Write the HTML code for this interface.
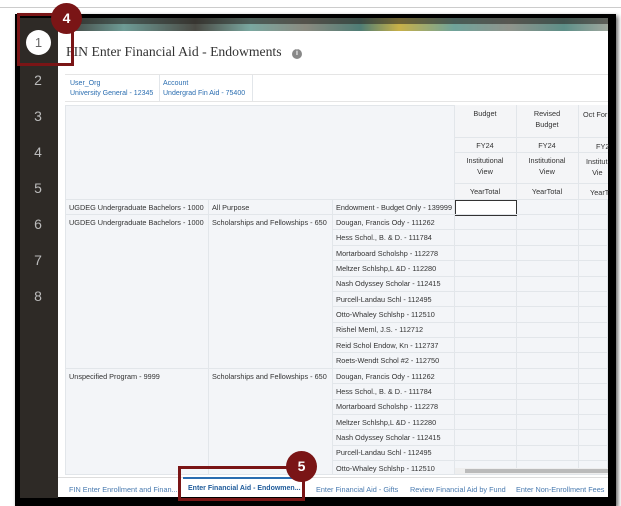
<!DOCTYPE html>
<html><head><style>
*{margin:0;padding:0;box-sizing:border-box}
body{width:621px;height:506px;background:#fff;position:relative;overflow:hidden;font-family:"Liberation Sans",sans-serif}
.a{position:absolute}
.t{position:absolute;font-size:7.3px;color:#333;white-space:nowrap}
.n{position:absolute;color:#bbb;font-size:14px;width:36px;text-align:center;left:20px}
.hl{position:absolute;height:1px;background:#e2e6ea}
.vl{position:absolute;width:1px;background:#e2e6ea}
.c{position:absolute;font-size:7.3px;color:#333;text-align:center;line-height:11px}
.tb{position:absolute;top:485px;color:#4a7bb0;font-size:7.3px;white-space:nowrap}
</style></head><body>
<div class="a" style="left:0;top:7px;width:621px;height:1px;background:#ccc"></div>
<div class="a" style="left:15px;top:14px;width:601px;height:492px;background:#000;box-shadow:2px 2px 4px #666"></div>
<div class="a" style="left:20px;top:18px;width:38px;height:480px;background:#2e2a26"></div>
<div class="a" style="left:58px;top:18px;width:550px;height:13px;background:linear-gradient(90deg,#3a3632,#6e9c96 12%,#4a4a44 25%,#7aa8a0 35%,#8a8a80 45%,#4f7d75 55%,#c8b048 62%,#6fa39b 72%,#90948c 82%,#5d8f88 92%,#a0a89e)"></div>
<div class="a" style="left:58px;top:18px;width:550px;height:6px;background:rgba(40,36,32,.55)"></div>
<div class="a" style="left:58px;top:31px;width:550px;height:466px;background:#fff"></div>
<div class="a" style="left:66px;top:44px;font-family:'Liberation Serif',serif;font-size:13.7px;color:#333">FIN Enter Financial Aid - Endowments</div>
<div class="a" style="left:292px;top:49px;width:10px;height:10px;border-radius:50%;background:#888;color:#fff;font-size:7px;text-align:center;line-height:10px;font-weight:bold">i</div>
<div class="a" style="left:65px;top:74px;width:543px;height:28px;border-top:1px solid #e5e5e5;border-bottom:1px solid #e5e5e5"></div>
<div class="vl" style="left:159px;top:75px;height:26px"></div><div class="vl" style="left:252px;top:75px;height:26px"></div>
<div class="t" style="left:70px;top:80px;color:#2a6db0;font-size:7px">User_Org</div>
<div class="t" style="left:70px;top:90px;color:#2a6db0;font-size:7px">University General - 12345</div>
<div class="t" style="left:163px;top:80px;color:#2a6db0;font-size:7px">Account</div>
<div class="t" style="left:163px;top:90px;color:#2a6db0;font-size:7px">Undergrad Fin Aid - 75400</div>
<div class="a" style="left:65px;top:105px;width:543px;height:370px;background:#f3f5f8;border:1px solid #e2e6ea"></div>
<div class="a" style="left:454px;top:105px;width:154px;height:94px;background:#f4f5f7"></div>
<div class="vl" style="left:454px;top:105px;height:370px"></div><div class="vl" style="left:516px;top:105px;height:370px"></div><div class="vl" style="left:578px;top:105px;height:370px"></div>
<div class="vl" style="left:208px;top:199px;height:276px"></div><div class="vl" style="left:332px;top:199px;height:276px"></div>
<div class="hl" style="left:454px;top:137px;width:154px"></div><div class="hl" style="left:454px;top:152px;width:154px"></div><div class="hl" style="left:454px;top:183px;width:154px"></div>
<div class="hl" style="left:65px;top:199px;width:543px"></div>
<div class="c" style="left:454px;top:108px;width:62px">Budget</div>
<div class="c" style="left:516px;top:108px;width:62px">Revised<br>Budget</div>
<div class="t" style="left:583px;top:110px">Oct For</div>
<div class="c" style="left:454px;top:140px;width:62px">FY24</div><div class="c" style="left:516px;top:140px;width:62px">FY24</div><div class="t" style="left:596px;top:142px">FY2</div>
<div class="c" style="left:454px;top:155px;width:62px">Institutional<br>View</div><div class="c" style="left:516px;top:155px;width:62px">Institutional<br>View</div><div class="t" style="left:586px;top:156px;line-height:11px">Institut<br>&nbsp;&nbsp;&nbsp;Vie</div>
<div class="c" style="left:454px;top:186px;width:62px">YearTotal</div><div class="c" style="left:516px;top:186px;width:62px">YearTotal</div><div class="t" style="left:590px;top:188px">YearT</div>
<div class="a" style="left:455px;top:200px;width:62px;height:16px;border:1.5px solid #333;background:#fff"></div>
<div class="t" style="left:69px;top:203px">UGDEG Undergraduate Bachelors - 1000</div><div class="t" style="left:212px;top:203px">All Purpose</div>
<div class="hl" style="left:65px;top:214px;width:543px"></div>
<div class="t" style="left:69px;top:218px">UGDEG Undergraduate Bachelors - 1000</div><div class="t" style="left:212px;top:218px">Scholarships and Fellowships - 650</div>
<div class="hl" style="left:65px;top:368px;width:543px"></div>
<div class="t" style="left:69px;top:372px">Unspecified Program - 9999</div><div class="t" style="left:212px;top:372px">Scholarships and Fellowships - 650</div>
<div class="t" style="left:336px;top:203px">Endowment - Budget Only - 139999</div>
<div class="t" style="left:336px;top:218px">Dougan, Francis Ody - 111262</div>
<div class="hl" style="left:332px;top:229px;width:276px"></div><div class="t" style="left:336px;top:233px">Hess Schol., B. &amp; D. - 111784</div>
<div class="hl" style="left:332px;top:245px;width:276px"></div><div class="t" style="left:336px;top:249px">Mortarboard Scholshp - 112278</div>
<div class="hl" style="left:332px;top:260px;width:276px"></div><div class="t" style="left:336px;top:264px">Meltzer Schlshp,L &amp;D - 112280</div>
<div class="hl" style="left:332px;top:276px;width:276px"></div><div class="t" style="left:336px;top:279px">Nash Odyssey Scholar - 112415</div>
<div class="hl" style="left:332px;top:291px;width:276px"></div><div class="t" style="left:336px;top:295px">Purcell-Landau Schl - 112495</div>
<div class="hl" style="left:332px;top:306px;width:276px"></div><div class="t" style="left:336px;top:310px">Otto-Whaley Schlshp - 112510</div>
<div class="hl" style="left:332px;top:322px;width:276px"></div><div class="t" style="left:336px;top:325px">Rishel Meml, J.S. - 112712</div>
<div class="hl" style="left:332px;top:337px;width:276px"></div><div class="t" style="left:336px;top:341px">Reid Schol Endow, Kn - 112737</div>
<div class="hl" style="left:332px;top:352px;width:276px"></div><div class="t" style="left:336px;top:356px">Roets-Wendt Schol #2 - 112750</div>
<div class="t" style="left:336px;top:372px">Dougan, Francis Ody - 111262</div>
<div class="hl" style="left:332px;top:383px;width:276px"></div><div class="t" style="left:336px;top:387px">Hess Schol., B. &amp; D. - 111784</div>
<div class="hl" style="left:332px;top:399px;width:276px"></div><div class="t" style="left:336px;top:402px">Mortarboard Scholshp - 112278</div>
<div class="hl" style="left:332px;top:414px;width:276px"></div><div class="t" style="left:336px;top:418px">Meltzer Schlshp,L &amp;D - 112280</div>
<div class="hl" style="left:332px;top:429px;width:276px"></div><div class="t" style="left:336px;top:433px">Nash Odyssey Scholar - 112415</div>
<div class="hl" style="left:332px;top:445px;width:276px"></div><div class="t" style="left:336px;top:448px">Purcell-Landau Schl - 112495</div>
<div class="hl" style="left:332px;top:460px;width:276px"></div><div class="t" style="left:336px;top:464px">Otto-Whaley Schlshp - 112510</div>
<div class="a" style="left:455px;top:468px;width:153px;height:6px;background:#eee"></div>
<div class="a" style="left:465px;top:469px;width:143px;height:4px;background:#bbb"></div>
<div class="a" style="left:58px;top:477px;width:550px;height:20px;background:#fff;border-top:1px solid #ddd"></div>
<div class="a" style="left:183px;top:477px;width:120px;height:2px;background:#2a6db0"></div>
<div class="tb" style="left:69px">FIN Enter Enrollment and Finan...</div>
<div class="tb" style="left:188px;color:#1f5b9a;font-weight:bold;font-size:7px">Enter Financial Aid - Endowmen...</div>
<div class="tb" style="left:316px">Enter Financial Aid - Gifts</div>
<div class="tb" style="left:410px">Review Financial Aid by Fund</div>
<div class="tb" style="left:516px">Enter Non-Enrollment Fees</div>
<div class="a" style="left:26px;top:30px;width:25px;height:25px;border-radius:50%;background:#fff;color:#666;font-size:13px;text-align:center;line-height:25px">1</div>
<div class="n" style="top:72px">2</div><div class="n" style="top:108px">3</div><div class="n" style="top:144px">4</div><div class="n" style="top:180px">5</div><div class="n" style="top:216px">6</div><div class="n" style="top:252px">7</div><div class="n" style="top:288px">8</div>
<div class="a" style="left:17px;top:13px;width:57px;height:53px;border:3px solid #7a1516"></div>
<div class="a" style="left:51px;top:3px;width:31px;height:31px;border-radius:50%;background:#7a1516;color:#fff;font-weight:bold;font-size:14px;text-align:center;line-height:31px">4</div>
<div class="a" style="left:178px;top:466px;width:127px;height:35px;border:3px solid #7a1516"></div>
<div class="a" style="left:286px;top:451px;width:31px;height:31px;border-radius:50%;background:#7a1516;color:#fff;font-weight:bold;font-size:14px;text-align:center;line-height:31px">5</div>
</body></html>
